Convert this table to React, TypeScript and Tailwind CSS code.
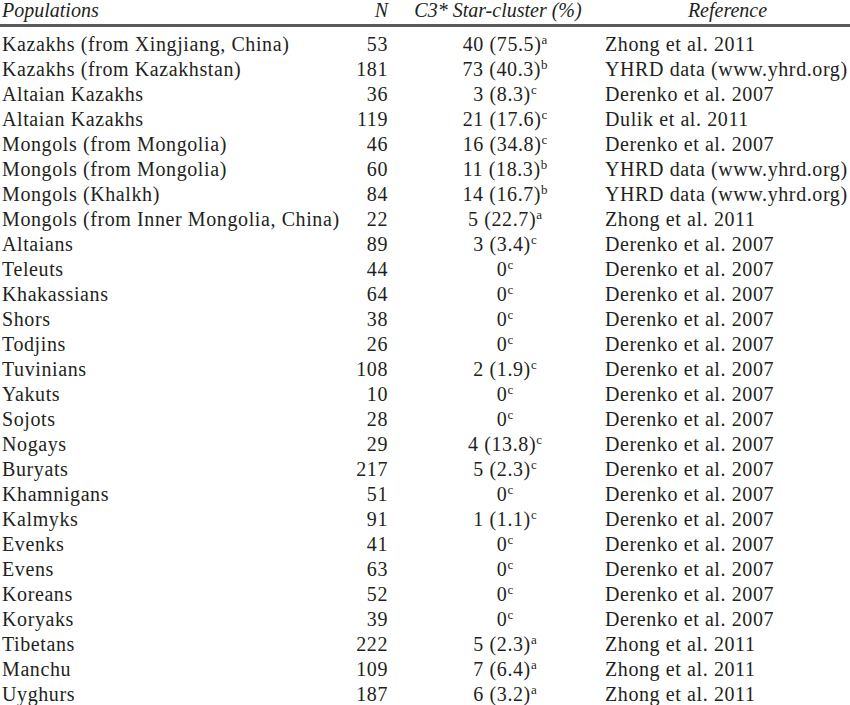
import React from "react";

type Row = [string, string, string, string, string];

const rows: Row[] = [
  ["Kazakhs (from Xingjiang, China)", "53", "40 (75.5)", "a", "Zhong et al. 2011"],
  ["Kazakhs (from Kazakhstan)", "181", "73 (40.3)", "b", "YHRD data (www.yhrd.org)"],
  ["Altaian Kazakhs", "36", "3 (8.3)", "c", "Derenko et al. 2007"],
  ["Altaian Kazakhs", "119", "21 (17.6)", "c", "Dulik et al. 2011"],
  ["Mongols (from Mongolia)", "46", "16 (34.8)", "c", "Derenko et al. 2007"],
  ["Mongols (from Mongolia)", "60", "11 (18.3)", "b", "YHRD data (www.yhrd.org)"],
  ["Mongols (Khalkh)", "84", "14 (16.7)", "b", "YHRD data (www.yhrd.org)"],
  ["Mongols (from Inner Mongolia, China)", "22", "5 (22.7)", "a", "Zhong et al. 2011"],
  ["Altaians", "89", "3 (3.4)", "c", "Derenko et al. 2007"],
  ["Teleuts", "44", "0", "c", "Derenko et al. 2007"],
  ["Khakassians", "64", "0", "c", "Derenko et al. 2007"],
  ["Shors", "38", "0", "c", "Derenko et al. 2007"],
  ["Todjins", "26", "0", "c", "Derenko et al. 2007"],
  ["Tuvinians", "108", "2 (1.9)", "c", "Derenko et al. 2007"],
  ["Yakuts", "10", "0", "c", "Derenko et al. 2007"],
  ["Sojots", "28", "0", "c", "Derenko et al. 2007"],
  ["Nogays", "29", "4 (13.8)", "c", "Derenko et al. 2007"],
  ["Buryats", "217", "5 (2.3)", "c", "Derenko et al. 2007"],
  ["Khamnigans", "51", "0", "c", "Derenko et al. 2007"],
  ["Kalmyks", "91", "1 (1.1)", "c", "Derenko et al. 2007"],
  ["Evenks", "41", "0", "c", "Derenko et al. 2007"],
  ["Evens", "63", "0", "c", "Derenko et al. 2007"],
  ["Koreans", "52", "0", "c", "Derenko et al. 2007"],
  ["Koryaks", "39", "0", "c", "Derenko et al. 2007"],
  ["Tibetans", "222", "5 (2.3)", "a", "Zhong et al. 2011"],
  ["Manchu", "109", "7 (6.4)", "a", "Zhong et al. 2011"],
  ["Uyghurs", "187", "6 (3.2)", "a", "Zhong et al. 2011"],
];

export default function App() {
  return (
    <div className="w-[850px] h-[705px] bg-white text-[#231f20] text-[20px] tracking-[0.6px] font-['Liberation_Serif',serif] overflow-hidden">
      <div className="flex pl-[2px] h-[24px] leading-[20px] italic tracking-normal">
        <div className="w-[338px]">Populations</div>
        <div className="w-[48px] text-right">N</div>
        <div className="w-[22px]" />
        <div className="w-[190px] text-center whitespace-nowrap pr-[14px]">C3* Star-cluster (%)</div>
        <div className="w-[5px]" />
        <div className="flex-1 text-center">Reference</div>
      </div>
      <div className="h-[3px] bg-[#5a5a5a]" />
      <div className="pt-[5px] leading-[25px]">
        {rows.map((r, i) => (
          <div key={i} className="flex pl-[2px] h-[25px]">
            <div className="w-[338px] whitespace-nowrap">{r[0]}</div>
            <div className="w-[48px] text-right">{r[1]}</div>
            <div className="w-[22px]" />
            <div className="w-[190px] text-center whitespace-nowrap">
              {r[2]}
              <sup className="text-[13px] top-[-0.55em] tracking-normal">{r[3]}</sup>
            </div>
            <div className="w-[5px]" />
            <div className="flex-1 whitespace-nowrap">{r[4]}</div>
          </div>
        ))}
      </div>
    </div>
  );
}
